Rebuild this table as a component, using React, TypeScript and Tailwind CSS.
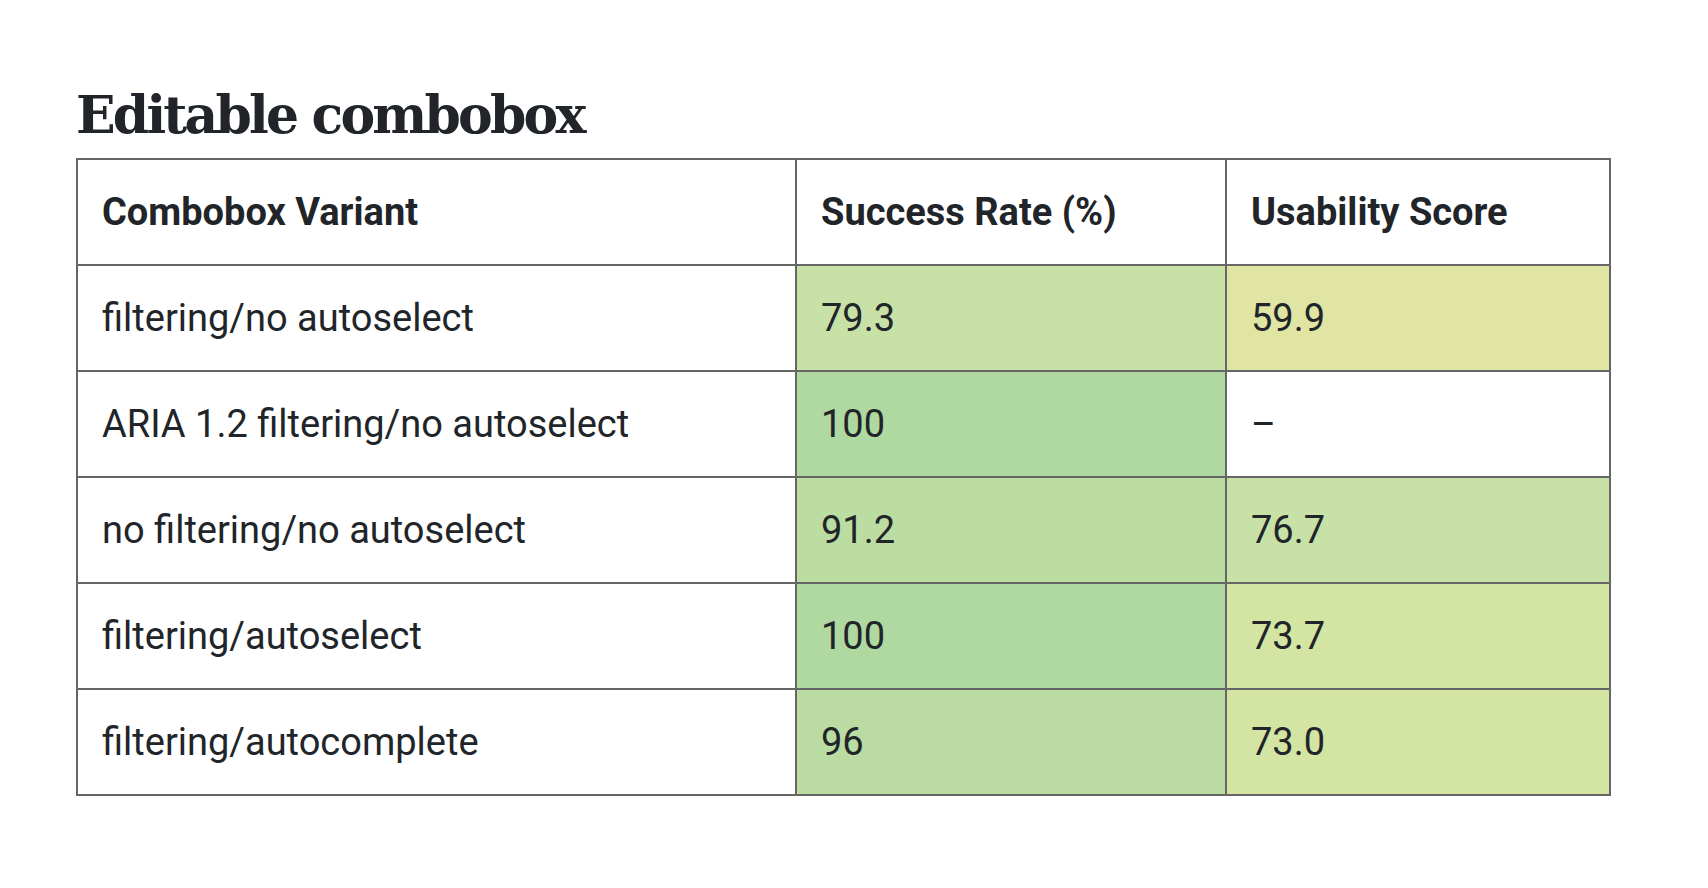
const rows = [
  { name: "filtering/no autoselect", rate: "79.3", rateBg: "bg-[#c8e1a6]", score: "59.9", scoreBg: "bg-[#e1e5a4]" },
  { name: "ARIA 1.2 filtering/no autoselect", rate: "100", rateBg: "bg-[#afd9a0]", score: "–", scoreBg: "bg-white" },
  { name: "no filtering/no autoselect", rate: "91.2", rateBg: "bg-[#bcdda2]", score: "76.7", scoreBg: "bg-[#c8e1a6]" },
  { name: "filtering/autoselect", rate: "100", rateBg: "bg-[#afd9a0]", score: "73.7", scoreBg: "bg-[#d3e4a3]" },
  { name: "filtering/autocomplete", rate: "96", rateBg: "bg-[#badca2]", score: "73.0", scoreBg: "bg-[#d4e4a3]" },
];

const cell = "border-2 border-[#666666] px-6 py-[26px] leading-[52px] text-left align-middle";

export default function App() {
  return (
    <div className="min-h-screen bg-white pl-[76px] pt-[79px] text-[#212529]">
      <h1 className="font-['DejaVu_Serif',serif] text-[52px] font-bold leading-[72px] tracking-[-2.8px]">
        Editable combobox
      </h1>
      <table className="mt-[7px] w-[1535px] border-collapse font-['Roboto',sans-serif] text-[38px]">
        <thead>
          <tr>
            <th className={`${cell} w-[719px] font-bold`}>Combobox Variant</th>
            <th className={`${cell} w-[430px] font-bold`}>Success Rate (%)</th>
            <th className={`${cell} font-bold`}>Usability Score</th>
          </tr>
        </thead>
        <tbody>
          {rows.map((r) => (
            <tr key={r.name}>
              <td className={`${cell} bg-white`}>{r.name}</td>
              <td className={`${cell} ${r.rateBg}`}>{r.rate}</td>
              <td className={`${cell} ${r.scoreBg}`}>{r.score}</td>
            </tr>
          ))}
        </tbody>
      </table>
    </div>
  );
}
